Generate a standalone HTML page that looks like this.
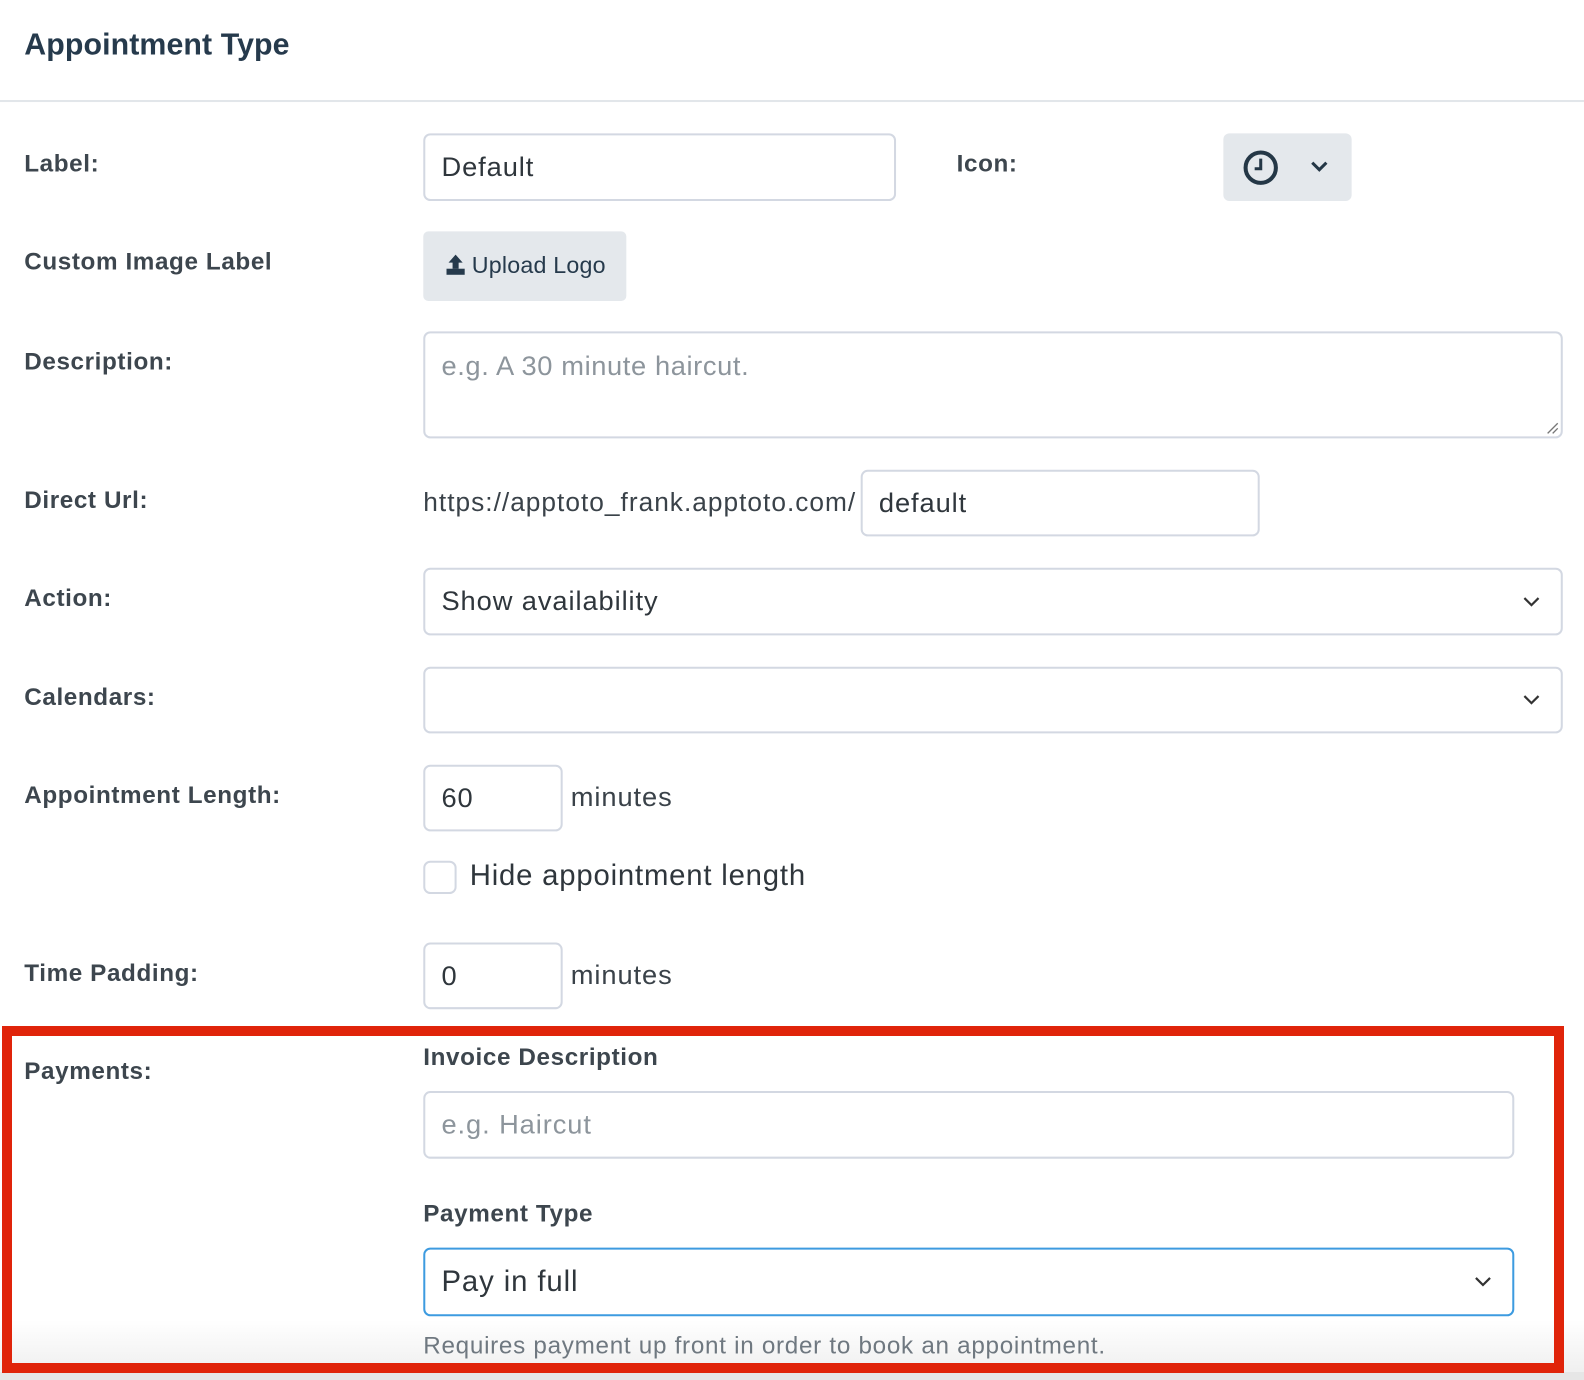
<!DOCTYPE html>
<html><head><meta charset="utf-8"><style>
*{box-sizing:border-box;margin:0;padding:0}
body{width:1584px;height:1380px;position:relative;background:#fff;font-family:"Liberation Sans",sans-serif;color:#333c44;overflow:hidden;letter-spacing:0.9px}
#w{position:absolute;left:0;top:0;width:1568px;height:1366px;transform:scale(1.0102);transform-origin:0 0}
.a{position:absolute;white-space:nowrap}
.lb{font-size:24px;font-weight:bold;color:#3d464e;letter-spacing:0.6px}
.in{position:absolute;border:2px solid #d3d8e2;border-radius:7px;background:#fff;font-size:27px;color:#2f363c;padding-left:16px;display:flex;align-items:center}
.ph{color:#8d959c}
.chev{position:absolute;right:20px;top:50%;margin-top:-6px}
</style></head><body>
<div class="a" style="left:0;top:1320px;width:1584px;height:60px;background:linear-gradient(#fff,#ededed)"></div>
<div class="a" style="left:0;top:1372px;width:1584px;height:8px;background:#e6e6e6"></div>
<div id="w">
<div class="a" style="left:24px;top:28px;font-size:30px;font-weight:bold;color:#263a4c;letter-spacing:0.1px">Appointment Type</div>
<div class="a" style="left:0;top:99px;width:1584px;height:2px;background:#e2e6ea"></div>

<div class="a lb" style="left:24px;top:149px">Label:</div>
<div class="in" style="left:419px;top:132px;width:468px;height:67px">Default</div>
<div class="a lb" style="left:947px;top:149px">Icon:</div>
<div class="a" style="left:1211px;top:132px;width:127px;height:67px;background:#e4e8ec;border-radius:6px">
<svg style="position:absolute;left:19px;top:16px" width="36" height="36" viewBox="0 0 36 36"><circle cx="18" cy="18" r="15" fill="none" stroke="#243746" stroke-width="4"/><path d="M18 9v10h-6" fill="none" stroke="#243746" stroke-width="3"/></svg>
<svg style="position:absolute;left:86px;top:27px" width="18" height="12" viewBox="0 0 18 12"><path d="M2 2l7 7 7-7" fill="none" stroke="#243746" stroke-width="3"/></svg>
</div>

<div class="a lb" style="left:24px;top:246px">Custom Image Label</div>
<div class="a" style="left:419px;top:229px;width:201px;height:69px;background:#e4e8ec;border-radius:5px;font-size:23px;color:#263a4c;letter-spacing:0.2px">
<svg style="position:absolute;left:22px;top:22px" width="20" height="22" viewBox="0 0 20 22"><path d="M10 1l7 8h-4v6h-6v-6h-4z" fill="#263a4c"/><rect x="1" y="15" width="18" height="6" fill="#263a4c"/></svg>
<span style="position:absolute;left:48px;top:20px">Upload Logo</span></div>

<div class="a lb" style="left:24px;top:345px">Description:</div>
<div class="in" style="left:419px;top:328px;width:1128px;height:106px;align-items:flex-start;padding-top:17px"><span class="ph" style="letter-spacing:0.6px">e.g. A 30 minute haircut.</span>
<svg style="position:absolute;right:2px;bottom:2px" width="14" height="14" viewBox="0 0 14 14"><path d="M13 3L3 13M13 8L8 13" stroke="#777" stroke-width="1.3"/></svg></div>

<div class="a lb" style="left:24px;top:482px">Direct Url:</div>
<div class="a" style="left:419px;top:482px;font-size:26px;color:#3a4249;letter-spacing:1px">https://apptoto_frank.apptoto.com/</div>
<div class="in" style="left:852px;top:465px;width:395px;height:66px">default</div>

<div class="a lb" style="left:24px;top:579px">Action:</div>
<div class="in" style="left:419px;top:562px;width:1128px;height:67px">Show availability<svg class="chev" width="18" height="11" viewBox="0 0 18 11"><path d="M2 2l7 7 7-7" fill="none" stroke="#333" stroke-width="2.2"/></svg></div>

<div class="a lb" style="left:24px;top:677px">Calendars:</div>
<div class="in" style="left:419px;top:660px;width:1128px;height:66px"><svg class="chev" width="18" height="11" viewBox="0 0 18 11"><path d="M2 2l7 7 7-7" fill="none" stroke="#333" stroke-width="2.2"/></svg></div>

<div class="a lb" style="left:24px;top:774px">Appointment Length:</div>
<div class="in" style="left:419px;top:757px;width:138px;height:66px">60</div>
<div class="a" style="left:565px;top:774px;font-size:27px;color:#3a4249">minutes</div>
<div class="a" style="left:419px;top:852px;width:33px;height:33px;border:2px solid #d3d8e2;border-radius:7px"></div>
<div class="a" style="left:465px;top:851px;font-size:29px;color:#2f363c;letter-spacing:0.8px">Hide appointment length</div>

<div class="a lb" style="left:24px;top:950px">Time Padding:</div>
<div class="in" style="left:419px;top:933px;width:138px;height:66px">0</div>
<div class="a" style="left:565px;top:950px;font-size:27px;color:#3a4249">minutes</div>

<div class="a lb" style="left:24px;top:1047px">Payments:</div>
<div class="a lb" style="left:419px;top:1033px">Invoice Description</div>
<div class="in" style="left:419px;top:1080px;width:1080px;height:67px"><span class="ph">e.g. Haircut</span></div>
<div class="a lb" style="left:419px;top:1188px">Payment Type</div>
<div class="in" style="left:419px;top:1235px;width:1080px;height:68px;border-color:#3d9be0;font-size:29px">Pay in full<svg class="chev" width="18" height="11" viewBox="0 0 18 11"><path d="M2 2l7 7 7-7" fill="none" stroke="#333" stroke-width="2.2"/></svg></div>
<div class="a" style="left:419px;top:1319px;font-size:24px;color:#6f7880;letter-spacing:0.7px">Requires payment up front in order to book an appointment.</div>
</div>
<div class="a" style="left:2px;top:1026px;width:1562px;height:347px;border:10px solid #e0240a"></div>
</body></html>
